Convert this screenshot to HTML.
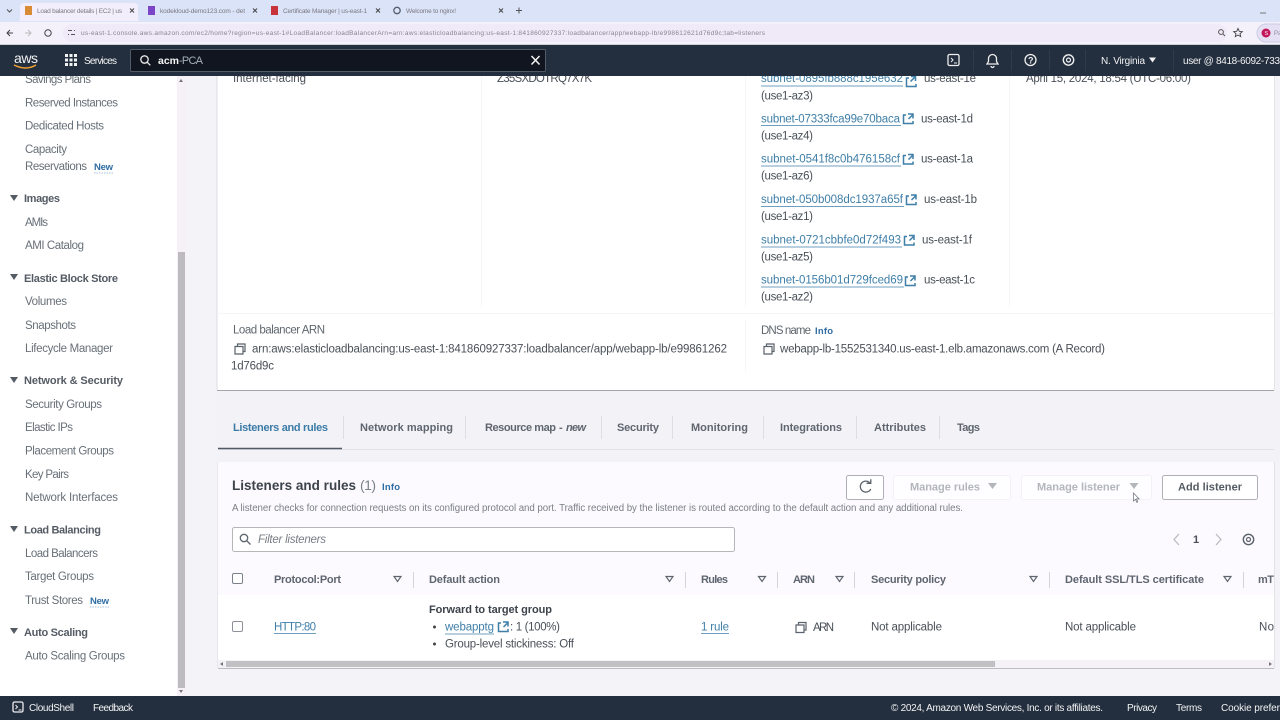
<!DOCTYPE html>
<html lang="en"><head><meta charset="utf-8"><title>Load balancer details</title>
<style>
html,body{margin:0;padding:0;width:1280px;height:720px;overflow:hidden;background:#fff}
svg{display:block;font-family:"Liberation Sans",sans-serif;filter:blur(.35px)}
.s{font-size:11.5px;fill:#687078}
.h{font-size:11px;font-weight:700;fill:#545b64}
.n{font-size:9.5px;font-weight:700;fill:#2f6da3}
.t{font-size:11.5px;fill:#4a5058}
.l{font-size:11.5px;fill:#3f7fa8}
.b{font-size:11px;font-weight:700;fill:#5f6670}
.w{font-size:10px;fill:#f2f3f3}
.m{fill:none;stroke:#5a626b;stroke-width:1.2}
.e{fill:none;stroke:#3f7fa8;stroke-width:1.5}
.u{stroke:#3f7fa8;stroke-width:.8}
</style></head><body>
<svg width="1280" height="720" viewBox="0 0 1280 720" xmlns="http://www.w3.org/2000/svg">
<rect width="1280" height="720" fill="#f4f3f8"/>

<!-- browser chrome -->
<rect width="1280" height="22" fill="#dbe3f8"/>
<path d="M18 21 Q20 21 20 18V7Q20 3 24 3H134Q138 3 138 7V18Q138 21 140 21Z" fill="#f2eefb"/>
<path d="M7 9.500l2.500 2.500 2.500-2.500" fill="none" stroke="#555" stroke-width="1"/>
<rect x="25" y="6" width="7" height="9" fill="#d98a35"/>
<text x="37" y="13" font-size="6.500" fill="#7a7a80" textLength="85">Load balancer details | EC2 | us</text>
<path d="M130 8.500l4 4m0-4l-4 4" stroke="#444" stroke-width="1"/>
<rect x="148" y="6" width="7" height="9" fill="#7b45c8"/>
<text x="160" y="13" font-size="6.500" fill="#7a7a80" textLength="85">kodekloud-demo123.com - det</text>
<path d="M253 8.500l4 4m0-4l-4 4" stroke="#444" stroke-width="1"/>
<rect x="271" y="6" width="7" height="9" fill="#c8323a"/>
<text x="283" y="13" font-size="6.500" fill="#7a7a80" textLength="84">Certificate Manager | us-east-1</text>
<path d="M376 8.500l4 4m0-4l-4 4" stroke="#444" stroke-width="1"/>
<circle cx="397" cy="10.500" r="3.200" fill="none" stroke="#54606e" stroke-width="1.300"/>
<text x="406" y="13" font-size="6.500" fill="#7a7a80" textLength="50">Welcome to nginx!</text>
<path d="M499 8.500l4 4m0-4l-4 4" stroke="#444" stroke-width="1"/>
<path d="M519 7.500v6m-3-3h6" stroke="#555" stroke-width="1"/>
<path d="M1260 13h6" stroke="#777" stroke-width="1"/>

<rect y="22" width="1280" height="23" fill="#f5f1fb"/>
<rect x="63" y="24" width="1164" height="18" rx="9" fill="#efe9f8"/>
<path d="M7 33h6m-3-3l-3 3 3 3" fill="none" stroke="#444" stroke-width="1"/>
<path d="M25 33h6m-3-3l3 3-3 3" fill="none" stroke="#bbb" stroke-width="1"/>
<circle cx="48" cy="33" r="3.200" fill="none" stroke="#444" stroke-width="1"/>
<path d="M68 30.500h4m2 0h1m-7 4h1m2 0h4" stroke="#555" stroke-width="1.100"/>
<text x="81" y="35" font-size="6.500" fill="#8a8590" textLength="684">us-east-1.console.aws.amazon.com/ec2/home?region=us-east-1#LoadBalancer:loadBalancerArn=arn:aws:elasticloadbalancing:us-east-1:841860927337:loadbalancer/app/webapp-lb/e998612621d76d9c;tab=listeners</text>
<circle cx="1221" cy="32" r="2.400" fill="none" stroke="#555" stroke-width="1"/>
<path d="M1223 34l2 2" stroke="#555"/>
<path d="M1238 28.500l1.300 2.800 3 .3-2.300 2 .7 3-2.700-1.600-2.700 1.600.7-3-2.300-2 3-.3z" fill="none" stroke="#444" stroke-width=".9"/>
<rect x="1257" y="24" width="30" height="18" rx="9" fill="#e6e0f4" stroke="#c9cce4"/>
<circle cx="1266" cy="33" r="4.500" fill="#c2185b"/>
<text x="1264.500" y="35" font-size="5.500" fill="#fff">S</text>
<text x="1274" y="35" font-size="6" fill="#8a8aa0">Pa</text>

<!-- sidebar -->
<rect x="0" y="76" width="186" height="620" fill="#fff"/>
<rect x="177" y="76" width="9" height="620" fill="#f5f1f6"/>
<rect x="178" y="252" width="7" height="436" fill="#bdbbbf"/>
<path d="M181 79l-2 3h4z M181 693l-2-3h4z" fill="#777"/>
<text class="s" x="25" y="83" textLength="66">Savings Plans</text>
<text class="s" x="25" y="106.500" textLength="93">Reserved Instances</text>
<text class="s" x="25" y="129.500" textLength="79">Dedicated Hosts</text>
<text class="s" x="25" y="153" textLength="42">Capacity</text>
<text class="s" x="25" y="170" textLength="62">Reservations</text>
<text class="n" x="94" y="170" textLength="19">New</text>
<path d="M94 173h19" stroke="#8db0cc" stroke-width=".7" stroke-dasharray="1.500 1"/>
<path d="M10 195h8l-4 6z M10 274h8l-4 6z M10 377h8l-4 6z M10 526h8l-4 6z M10 628h8l-4 6z" fill="#545b64"/>
<text class="h" x="24" y="202" textLength="36">Images</text>
<text class="s" x="25" y="226" textLength="23">AMIs</text>
<text class="s" x="25" y="249" textLength="59">AMI Catalog</text>
<text class="h" x="24" y="282" textLength="94">Elastic Block Store</text>
<text class="s" x="25" y="305" textLength="42">Volumes</text>
<text class="s" x="25" y="329" textLength="51">Snapshots</text>
<text class="s" x="25" y="352" textLength="88">Lifecycle Manager</text>
<text class="h" x="24" y="384" textLength="99">Network &amp; Security</text>
<text class="s" x="25" y="408" textLength="77">Security Groups</text>
<text class="s" x="25" y="431" textLength="48">Elastic IPs</text>
<text class="s" x="25" y="454.500" textLength="89">Placement Groups</text>
<text class="s" x="25" y="478" textLength="44">Key Pairs</text>
<text class="s" x="25" y="501" textLength="93">Network Interfaces</text>
<text class="h" x="24" y="533.500" textLength="77">Load Balancing</text>
<text class="s" x="25" y="557" textLength="73">Load Balancers</text>
<text class="s" x="25" y="580" textLength="69">Target Groups</text>
<text class="s" x="25" y="604" textLength="58">Trust Stores</text>
<text class="n" x="90" y="604" textLength="19">New</text>
<path d="M90 607h19" stroke="#8db0cc" stroke-width=".7" stroke-dasharray="1.500 1"/>
<text class="h" x="24" y="636" textLength="64">Auto Scaling</text>
<text class="s" x="25" y="659.500" textLength="100">Auto Scaling Groups</text>

<!-- details card -->
<rect x="217" y="76" width="1057" height="314" fill="#fff"/>
<path d="M217 76v314" stroke="#dcdce0"/>
<path d="M217 390.500h1057" stroke="#a5a5a8" stroke-width="1"/>
<path d="M1274.500 76v314" stroke="#e4e4e8"/>
<path d="M481.500 76v231M745.500 76v231M1009.500 76v231M745.500 320v52M217 313.500h1057" stroke="#f6f6f8"/>
<text class="t" x="233" y="82" textLength="73">Internet-facing</text>
<text class="t" x="497" y="82" textLength="95">Z35SXDOTRQ7X7K</text>
<text class="l" x="761" y="82" textLength="142">subnet-0895fb888c195e632</text>
<path class="u" d="M761 86h142"/>
<path class="e" d="M909 78h-2.500v8.500h9.500V84M911 76.500h4.500V81M915 77l-4.500 4.500"/>
<text class="t" x="924" y="82" textLength="52">us-east-1e</text>
<text class="t" x="1026" y="82" textLength="165">April 15, 2024, 18:54 (UTC-06:00)</text>
<text class="t" x="761" y="99.500" textLength="52">(use1-az3)</text>

<text class="l" x="761" y="122.500" textLength="139">subnet-07333fca99e70baca</text>
<path class="u" d="M761 125.500h140"/>
<path class="e" d="M906 115h-2.500v8.500h9.500V121M908 114h5v4.500M913 114.500l-4.500 4.500"/>
<text class="t" x="921" y="122.500" textLength="52">us-east-1d</text>
<text class="t" x="761" y="139.500" textLength="52">(use1-az4)</text>

<text class="l" x="761" y="162.500" textLength="139">subnet-0541f8c0b476158cf</text>
<path class="u" d="M761 166h140"/>
<path class="e" d="M906 155.500h-2.500v8.500h9.500V161.500M908 154.500h5V159M913 155l-4.500 4.500"/>
<text class="t" x="921" y="162.500" textLength="52">us-east-1a</text>
<text class="t" x="761" y="179.500" textLength="52">(use1-az6)</text>

<text class="l" x="761" y="203" textLength="142">subnet-050b008dc1937a65f</text>
<path class="u" d="M761 206.500h143"/>
<path class="e" d="M909 196h-2.500v8.500h9.500V202M911 195h5v4.500M916 195.500l-4.500 4.500"/>
<text class="t" x="924" y="203" textLength="53">us-east-1b</text>
<text class="t" x="761" y="220" textLength="52">(use1-az1)</text>

<text class="l" x="761" y="243.500" textLength="140">subnet-0721cbbfe0d72f493</text>
<path class="u" d="M761 247h141"/>
<path class="e" d="M907 236.500h-2.500v8.500h9.500V242.500M909 235.500h5V240M914 236l-4.500 4.500"/>
<text class="t" x="922" y="243.500" textLength="50">us-east-1f</text>
<text class="t" x="761" y="260.500" textLength="52">(use1-az5)</text>

<text class="l" x="761" y="283.500" textLength="142">subnet-0156b01d729fced69</text>
<path class="u" d="M761 287h143"/>
<path class="e" d="M908 277h-2.500v8.500h9.500V283M910 276h5v4.500M915 276.500l-4.500 4.500"/>
<text class="t" x="924" y="283.500" textLength="51">us-east-1c</text>
<text class="t" x="761" y="300.500" textLength="52">(use1-az2)</text>

<text class="s" x="233" y="333.500" textLength="92" style="fill:#5f666e">Load balancer ARN</text>
<path class="m" d="M235 346.500h8v7.500h-8zM237.500 346.500v-2.500h7.500v7.500h-2"/>
<text class="t" x="252" y="352.500" textLength="475">arn:aws:elasticloadbalancing:us-east-1:841860927337:loadbalancer/app/webapp-lb/e99861262</text>
<text class="t" x="231" y="369.500" textLength="43">1d76d9c</text>
<text class="s" x="761" y="334" textLength="50" style="fill:#5f666e">DNS name</text>
<text class="n" x="815" y="334" textLength="18">Info</text>
<path class="m" d="M764 346.500h8v7.500h-8zM766.500 346.500v-2.500h7.500v7.500h-2"/>
<text class="t" x="780" y="352.500" textLength="325">webapp-lb-1552531340.us-east-1.elb.amazonaws.com (A Record)</text>

<!-- tabs -->
<rect x="217" y="391" width="1063" height="71" fill="#f3f2f6"/>
<path d="M218 449.500h1056" stroke="#e2e2e6"/>
<path d="M218 448.500h124" stroke="#4f5a66" stroke-width="1.500"/>
<path d="M343.500 416v23M465.500 416v23M601.500 416v23M672.500 416v23M763.500 416v23M856.500 416v23M939.500 416v23" stroke="#dedde2"/>
<text class="b" x="233" y="431" textLength="95" style="fill:#3b7ba8">Listeners and rules</text>
<text class="b" x="360" y="431" textLength="93">Network mapping</text>
<text class="b" x="485" y="431" textLength="71">Resource map</text>
<text class="b" x="559" y="431">-</text>
<text class="b" x="566" y="431" textLength="20" font-style="italic">new</text>
<text class="b" x="617" y="431" textLength="42">Security</text>
<text class="b" x="691" y="431" textLength="57">Monitoring</text>
<text class="b" x="780" y="431" textLength="62">Integrations</text>
<text class="b" x="874" y="431" textLength="52">Attributes</text>
<text class="b" x="957" y="431" textLength="23">Tags</text>

<!-- listeners card -->
<rect x="217" y="462" width="1057" height="206" fill="#fcfaff"/>
<path d="M1274.500 462v206" stroke="#e4e4e8"/>
<path d="M217.500 462v206" stroke="#e8e8ec"/>
<text x="232" y="490" font-size="13.500" font-weight="700" fill="#3d434b" textLength="124">Listeners and rules</text>
<text x="360" y="490" font-size="14" fill="#7b8189" textLength="16">(1)</text>
<text class="n" x="382" y="490" textLength="18">Info</text>
<text x="232" y="511" font-size="9.700" fill="#7a7f86" textLength="731">A listener checks for connection requests on its configured protocol and port. Traffic received by the listener is routed according to the default action and any additional rules.</text>

<rect x="846.500" y="475.500" width="37" height="24" rx="2" fill="#fff" stroke="#aeb0b5"/>
<path d="M870 483a5.500 5.500 0 1 0 .8 6" fill="none" stroke="#5b626a" stroke-width="1.300"/>
<path d="M866.500 483.300h4.300v-4" fill="none" stroke="#5b626a" stroke-width="1.300"/>
<rect x="893.500" y="475.500" width="117" height="24" rx="2" fill="#fefdff" stroke="#f3f1f6"/>
<text x="910" y="490.500" font-size="11" font-weight="700" fill="#b3b6bb" textLength="70">Manage rules</text>
<path d="M988 483h9l-4.500 6z" fill="#b3b6bb"/>
<rect x="1021.500" y="475.500" width="130" height="24" rx="2" fill="#fefdff" stroke="#f3f1f6"/>
<text x="1037" y="490.500" font-size="11" font-weight="700" fill="#b3b6bb" textLength="83">Manage listener</text>
<path d="M1129.500 483h9l-4.500 6z" fill="#b3b6bb"/>
<rect x="1162.500" y="475.500" width="95" height="24" rx="2" fill="#fff" stroke="#aeb0b5"/>
<text x="1178" y="490.500" font-size="11" font-weight="700" fill="#545b64" textLength="64">Add listener</text>
<path d="M1133.500 493v8l2-1.700 1.300 3 1-.4-1.300-3h2.600z" fill="#fff" stroke="#68707a" stroke-width=".7"/>

<rect x="232.500" y="527.500" width="502" height="24" rx="2" fill="#fff" stroke="#b4b6ba"/>
<circle cx="244" cy="538" r="3.700" fill="none" stroke="#5f666e" stroke-width="1.300"/>
<path d="M247 541l3.500 3.500" stroke="#5f666e" stroke-width="1.300"/>
<text x="258" y="543" font-size="11.500" font-style="italic" fill="#777d85" textLength="68">Filter listeners</text>

<path d="M1179 534l-5 5.500 5 5.500" fill="none" stroke="#b6b9be" stroke-width="1.200"/>
<text x="1193" y="543" font-size="11" font-weight="700" fill="#4a5058">1</text>
<path d="M1216 534l5 5.500-5 5.500" fill="none" stroke="#b6b9be" stroke-width="1.200"/>
<circle cx="1248.500" cy="539.500" r="5.200" fill="none" stroke="#5a626b" stroke-width="1.400"/>
<circle cx="1248.500" cy="539.500" r="2" fill="none" stroke="#5a626b" stroke-width="1.200"/>

<!-- table -->
<rect x="218" y="595" width="1056" height="65" fill="#fff"/>
<rect x="232.500" y="573.500" width="10" height="10" rx="1.500" fill="#fff" stroke="#7b8189"/>
<text class="b" x="274" y="583" textLength="67">Protocol:Port</text>
<text class="b" x="429" y="583" textLength="71">Default action</text>
<text class="b" x="701" y="583" textLength="27">Rules</text>
<text class="b" x="793" y="583" textLength="22">ARN</text>
<text class="b" x="871" y="583" textLength="75">Security policy</text>
<text class="b" x="1065" y="583" textLength="139">Default SSL/TLS certificate</text>
<text class="b" x="1258" y="583" textLength="16">mT</text>
<path d="M394 576.500h7l-3.500 5z M666 576.500h7l-3.500 5z M758.500 576.500h7l-3.500 5z M836 576.500h7l-3.500 5z M1030 576.500h7l-3.500 5z M1224 576.500h7l-3.500 5z" fill="none" stroke="#5f666e" stroke-width="1.200"/>
<path d="M413.500 572v16M685.500 572v16M777.500 572v16M854.500 572v16M1049.500 572v16M1243.500 572v16" stroke="#d4d4d8" stroke-width="1"/>

<rect x="232.500" y="621.500" width="10" height="10" rx="1.500" fill="#fff" stroke="#8e9298"/>
<text class="l" x="274" y="630.500" textLength="42">HTTP:80</text>
<path class="u" d="M274 633.500h42"/>
<text x="429" y="613" font-size="11" font-weight="700" fill="#3d434b" textLength="123">Forward to target group</text>
<circle cx="434.500" cy="627" r="1.500" fill="#444"/>
<text class="l" x="445" y="630.500" textLength="49">webapptg</text>
<path class="u" d="M445 634h49"/>
<path class="e" d="M501 623h-2.500v8.500h9.500V629M503 622h5v4.500M508 622.500l-4.500 4.500"/>
<text class="t" x="510" y="630.500" textLength="50">: 1 (100%)</text>
<circle cx="434.500" cy="644" r="1.500" fill="#444"/>
<text class="t" x="445" y="647.500" textLength="129">Group-level stickiness: Off</text>
<text class="l" x="701" y="630.500" textLength="28">1 rule</text>
<path class="u" d="M701 633.500h28"/>
<path class="m" d="M796 625h8v7.500h-8zM798.500 625v-2.500h7.500v7.500h-2"/>
<text class="t" x="813" y="631" textLength="21">ARN</text>
<text class="t" x="871" y="630.500" textLength="71">Not applicable</text>
<text class="t" x="1065" y="630.500" textLength="71">Not applicable</text>
<text class="t" x="1259" y="630.500" textLength="15">No</text>

<rect x="218" y="660" width="1056" height="8" fill="#f4f2f6"/>
<rect x="226" y="661" width="769" height="6" fill="#c1c0c3"/>
<path d="M218 668.500h1056" stroke="#bdbdc0"/>
<path d="M223 662l-3 2 3 2z M1269 662l3 2-3 2z" fill="#777"/>

<!-- top nav -->
<rect y="45" width="1280" height="31" fill="#232e3e"/>
<rect y="44" width="1280" height="1" fill="#cfd0d6"/>
<text x="14" y="63" font-size="14" fill="#f2f3f3" textLength="24">aws</text>
<path d="M14 65q12 6 22 0" fill="none" stroke="#f0a030" stroke-width="1.500"/>
<g fill="#f2f3f3"><rect x="65" y="54" width="3" height="3"/><rect x="69.500" y="54" width="3" height="3"/><rect x="74" y="54" width="3" height="3"/><rect x="65" y="58.500" width="3" height="3"/><rect x="69.500" y="58.500" width="3" height="3"/><rect x="74" y="58.500" width="3" height="3"/><rect x="65" y="63" width="3" height="3"/><rect x="69.500" y="63" width="3" height="3"/><rect x="74" y="63" width="3" height="3"/></g>
<text class="w" x="84" y="64" textLength="33">Services</text>
<rect x="130.500" y="49.500" width="415" height="22" rx="1" fill="#10151f" stroke="#525c68"/>
<circle cx="144.500" cy="59.500" r="3.700" fill="none" stroke="#e8e8e8" stroke-width="1.300"/>
<path d="M147.300 62.300l3 3" stroke="#e8e8e8" stroke-width="1.300"/>
<text x="158" y="64" font-size="10.500" font-weight="700" fill="#f5f5f5" textLength="21">acm</text>
<text x="179" y="64" font-size="11" fill="#a8b0ba" textLength="24">-PCA</text>
<path d="M531.500 56l8 8.500m0-8.500l-8 8.500" stroke="#f2f3f3" stroke-width="1.500"/>

<rect x="948" y="54.500" width="11" height="11" rx="1.500" fill="none" stroke="#eee" stroke-width="1.300"/>
<path d="M951 58l2 2-2 2M954 63h3" fill="none" stroke="#eee" stroke-width="1"/>
<path d="M992.500 54.500a4 4 0 0 0-4 4v3l-1.500 2.500h11l-1.500-2.500v-3a4 4 0 0 0-4-4zM991 66a1.500 1.500 0 0 0 3 0" fill="none" stroke="#eee" stroke-width="1.300"/>
<circle cx="1030.500" cy="60" r="5.500" fill="none" stroke="#eee" stroke-width="1.300"/>
<text x="1028" y="63.500" font-size="9" font-weight="700" fill="#eee">?</text>
<circle cx="1068.500" cy="60" r="5.200" fill="none" stroke="#eee" stroke-width="1.400"/>
<circle cx="1068.500" cy="60" r="2" fill="none" stroke="#eee" stroke-width="1.200"/>
<path d="M1011.500 50v21M973.500 50v21M1049.500 50v21M1173.500 50v21M1085.500 50v21" stroke="#2f3a4a"/>
<text class="w" x="1101" y="64" textLength="44">N. Virginia</text>
<path d="M1149 57.500h7l-3.500 5z" fill="#f2f3f3"/>
<text class="w" x="1183" y="64" textLength="97">user @ 8418-6092-733</text>

<!-- footer -->
<rect y="696" width="1280" height="24" fill="#232e3e"/>
<rect x="13" y="702" width="10" height="10" rx="1.500" fill="none" stroke="#eee" stroke-width="1.300"/>
<path d="M15.500 705l2 2-2 2M18.500 710h3" fill="none" stroke="#eee" stroke-width="1"/>
<text class="w" x="29" y="711" textLength="45">CloudShell</text>
<text class="w" x="93" y="711" textLength="40">Feedback</text>
<text class="w" x="891" y="711" textLength="212">© 2024, Amazon Web Services, Inc. or its affiliates.</text>
<text class="w" x="1127" y="711" textLength="30">Privacy</text>
<text class="w" x="1176" y="711" textLength="26">Terms</text>
<text class="w" x="1221" y="711" textLength="59">Cookie prefer</text>
</svg>
</body></html>
